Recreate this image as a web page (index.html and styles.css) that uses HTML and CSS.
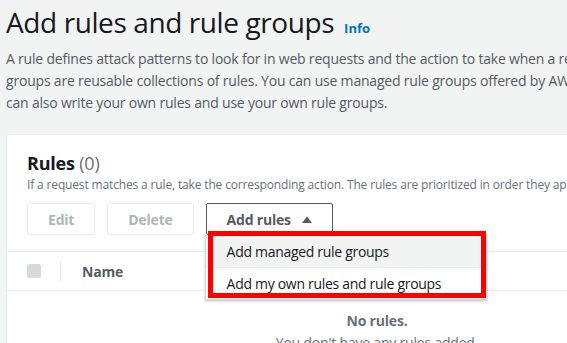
FILE: index.html
```html
<!DOCTYPE html>
<html lang="en">
<head>
<meta charset="utf-8">
<title>Add rules and rule groups</title>
<link rel="stylesheet" href="styles.css">
</head>
<body>
<div class="page">
  <header class="page-header">
    <h1 class="title">Add rules and rule groups <a class="info" href="#">Info</a></h1>
    <p class="lead">A rule defines attack patterns to look for in web requests and the action to take when a request matches the patterns. Rule<br>groups are reusable collections of rules. You can use managed rule groups offered by AWS and AWS Marketplace sellers. You<br>can also write your own rules and use your own rule groups.</p>
  </header>

  <section class="card">
    <div class="card-header">
      <h2 class="card-title">Rules <span class="count">(0)</span></h2>
      <p class="card-desc">If a request matches a rule, take the corresponding action. The rules are prioritized in order they appear.</p>
      <div class="actions">
        <button class="btn btn-disabled">Edit</button>
        <button class="btn btn-disabled">Delete</button>
        <div class="dropdown">
          <button class="btn btn-normal">Add rules
            <svg class="caret" width="10" height="7" viewBox="0 0 10 7"><polygon points="0,7 5,0.5 10,7" fill="#545b64"/></svg>
          </button>
          <ul class="menu">
            <li class="menu-item highlighted">Add managed rule groups</li>
            <li class="menu-item">Add my own rules and rule groups</li>
          </ul>
          <div class="annotation"></div>
        </div>
      </div>
    </div>
    <div class="table-head">
      <span class="checkbox"></span>
      <span class="divider"></span>
      <span class="col-name">Name</span>
    </div>
    <div class="empty">
      <div class="empty-title">No rules.</div>
      <div class="empty-text">You don't have any rules added.</div>
    </div>
  </section>
</div>
</body>
</html>
```
FILE: styles.css
```css
html, body {
  margin: 0;
  padding: 0;
}
body {
  background: #f2f3f3;
  font-family: "Open Sans", "Noto Sans", sans-serif;
  color: #16191f;
  overflow: hidden;
  width: 567px;
  height: 343px;
}
.page {
  padding: 4px 0 0 6px;
  width: 900px;
}
.title {
  margin: 0;
  font-size: 28px;
  line-height: 36px;
  font-weight: 400;
  color: #16191f;
  white-space: nowrap;
  letter-spacing: -0.4px;
}
.info {
  font-size: 13px;
  line-height: 1;
  font-weight: 700;
  color: #0073bb;
  text-decoration: none;
  letter-spacing: 0;
  margin-left: 3px;
}
.lead {
  margin: 8px 0 0 0;
  font-size: 14px;
  line-height: 22px;
  color: #545b64;
  white-space: nowrap;
  letter-spacing: -0.2px;
}
.card {
  margin-top: 20px;
  width: 740px;
  background: #fff;
  border: 1px solid #eaeded;
  height: 400px;
}
.card-header {
  padding: 16px 20px 16px 20px;
  border-bottom: 1px solid #eaeded;
}
.card-title {
  margin: 0;
  font-size: 18px;
  line-height: 24px;
  font-weight: 700;
  color: #16191f;
  letter-spacing: -0.2px;
}
.count {
  font-weight: 400;
  color: #687078;
}
.card-desc {
  margin: 2px 0 0 0;
  font-size: 12px;
  line-height: 16px;
  color: #687078;
  white-space: nowrap;
  letter-spacing: -0.15px;
}
.actions {
  margin-top: 10px;
  display: flex;
  gap: 12px;
  align-items: flex-start;
}
.btn {
  height: 32px;
  box-sizing: border-box;
  padding: 0 20px;
  border-radius: 2px;
  background: #fff;
  font-family: inherit;
  font-size: 14px;
  font-weight: 700;
  letter-spacing: -0.2px;
  display: inline-flex;
  align-items: center;
  gap: 11px;
  cursor: pointer;
}
.btn-disabled {
  border: 1px solid #eaeded;
  color: #aab7b8;
}
.btn-normal {
  border: 1px solid #545b64;
  color: #545b64;
}
.dropdown {
  position: relative;
}
.menu {
  position: absolute;
  top: 32px;
  left: -1px;
  width: 280px;
  margin: 0;
  padding: 0;
  list-style: none;
  background: #fff;
  border: 1px solid #d5dbdb;
  box-shadow: 0 1px 2px rgba(0, 28, 36, 0.3);
}
.menu-item {
  height: 31px;
  line-height: 31px;
  padding-left: 21px;
  font-size: 14px;
  color: #16191f;
  letter-spacing: -0.3px;
  border-bottom: 1px solid #eaeded;
}
.menu-item:last-child {
  border-bottom: 0;
}
.menu-item.highlighted {
  background: #f2f3f3;
}
.annotation {
  position: absolute;
  left: 2px;
  top: 28px;
  width: 278px;
  height: 67px;
  box-sizing: border-box;
  border: 5px solid #ff0000;
}
.table-head {
  height: 38px;
  display: flex;
  align-items: center;
  border-bottom: 1px solid #eaeded;
  padding-left: 20px;
}
.checkbox {
  width: 14px;
  height: 14px;
  background: #d5dbdb;
  border-radius: 2px;
}
.divider {
  width: 1px;
  height: 20px;
  background: #eaeded;
  margin-left: 19px;
}
.col-name {
  margin-left: 21px;
  font-size: 14px;
  font-weight: 700;
  color: #545b64;
  letter-spacing: -0.2px;
}
.empty {
  text-align: center;
  padding-top: 19px;
}
.empty-title {
  font-size: 14px;
  line-height: 22px;
  font-weight: 700;
  color: #687078;
  letter-spacing: -0.2px;
}
.empty-text {
  font-size: 14px;
  line-height: 22px;
  color: #687078;
  letter-spacing: -0.2px;
}
```
